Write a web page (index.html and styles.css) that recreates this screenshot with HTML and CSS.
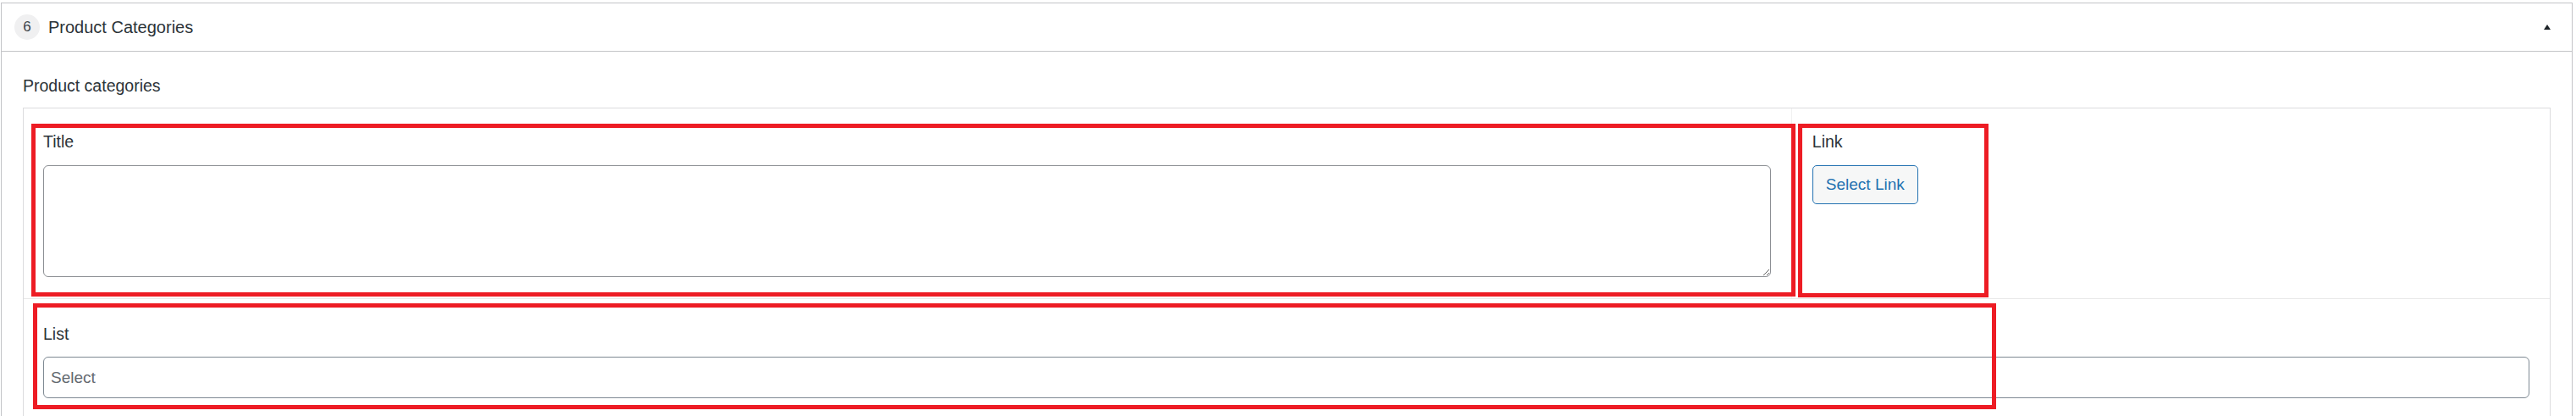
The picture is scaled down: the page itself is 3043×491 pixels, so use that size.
FILE: index.html
```html
<!DOCTYPE html>
<html lang="en">
<head>
  <meta charset="UTF-8">
  <meta name="viewport" content="width=device-width, initial-scale=1.0">
  <title>Product Categories</title>
  <link rel="stylesheet" href="styles.css">
</head>
<body>
  <div class="postbox">
    <div class="postbox-header">
      <span class="count">6</span>
      <h2 class="postbox-title">Product Categories</h2>
      <span class="toggle"></span>
    </div>
    <div class="postbox-body">
      <div class="group-label">Product categories</div>
      <div class="repeater">
        <div class="row">
          <div class="field field-title">
            <label class="field-label">Title</label>
            <textarea class="field-textarea"></textarea>
          </div>
          <div class="field field-link">
            <label class="field-label">Link</label>
            <button type="button" class="button">Select Link</button>
          </div>
        </div>
        <div class="row row-full">
          <div class="field field-list">
            <label class="field-label">List</label>
            <input type="text" class="field-select" placeholder="Select">
          </div>
        </div>

        <!-- annotation marks -->
        <div class="mark mark-title"></div>
        <div class="mark mark-link"></div>
        <div class="mark mark-list"></div>
      </div>
    </div>
  </div>
</body>
</html>
```
FILE: styles.css
```css
body {
  margin: 0;
  background-color: #fff;
  font-family: "Liberation Sans", Arial, sans-serif;
  color: #1d2327;
}
.postbox {
  margin: 3px 4px 0 1px;
  border: 1px solid #c3c4c7;
  border-bottom: none;
  background-color: #fff;
}
.postbox-header {
  display: flex;
  align-items: center;
  height: 56px;
  padding: 0 25px 0 15px;
  border-bottom: 1px solid #c3c4c7;
}
.count {
  display: flex;
  align-items: center;
  justify-content: center;
  width: 30px;
  height: 30px;
  border-radius: 50%;
  background-color: #f0f0f1;
  color: #3c434a;
  font-size: 17px;
}
.postbox-title {
  flex: 1;
  margin: 0 0 0 10px;
  font-size: 20px;
  font-weight: normal;
  color: #2c3338;
}
.toggle {
  width: 0;
  height: 0;
  border-left: 4px solid transparent;
  border-right: 4px solid transparent;
  border-bottom: 6px solid #1d2327;
}
.postbox-body {
  padding: 27px 25px 0 25px;
}
.group-label {
  font-size: 19.5px;
  line-height: 27px;
  margin-bottom: 12px;
  color: #2c3338;
}
.repeater {
  position: relative;
  border: 1px solid #dcdcde;
  border-bottom: none;
}
.row {
  display: grid;
  grid-template-columns: 70% 30%;
  border-bottom: 1px solid #e8e8e8;
}
.row-full {
  grid-template-columns: 1fr;
  border-bottom: none;
}
.field {
  display: flex;
  flex-direction: column;
  align-items: flex-start;
  padding: 26px 24px 25px 23px;
}
.field-title {
  border-right: 1px solid #f0f0f1;
}
.field-link {
  padding-left: 24px;
}
.field-list {
  padding-top: 28px;
  padding-right: 24px;
}
.field-label {
  font-size: 19.5px;
  line-height: 27px;
  margin-bottom: 14px;
  color: #2c3338;
}
.field-list .field-label {
  margin-bottom: 13px;
}
.field-textarea {
  box-sizing: border-box;
  width: 100%;
  height: 132px;
  border: 1px solid #8c8f94;
  border-radius: 6px;
  font-family: inherit;
  font-size: 19.5px;
}
.button {
  height: 46px;
  padding: 0 15px;
  border: 1px solid #2271b1;
  border-radius: 5px;
  background-color: #f6f7f7;
  color: #2271b1;
  font-family: inherit;
  font-size: 19px;
}
.field-select {
  box-sizing: border-box;
  width: 100%;
  height: 49px;
  padding: 0 8px;
  border: 1px solid #7e8993;
  border-radius: 6px;
  font-family: inherit;
  font-size: 19px;
  color: #2c3338;
}
.field-select::placeholder {
  color: #646970;
}
.mark {
  position: absolute;
  border: 5px solid #ed1c24;
}
.mark-title {
  left: 9px;
  top: 18px;
  width: 2074px;
  height: 194px;
}
.mark-link {
  left: 2096px;
  top: 18px;
  width: 215px;
  height: 195px;
}
.mark-list {
  left: 11px;
  top: 230px;
  width: 2309px;
  height: 115px;
}
```
